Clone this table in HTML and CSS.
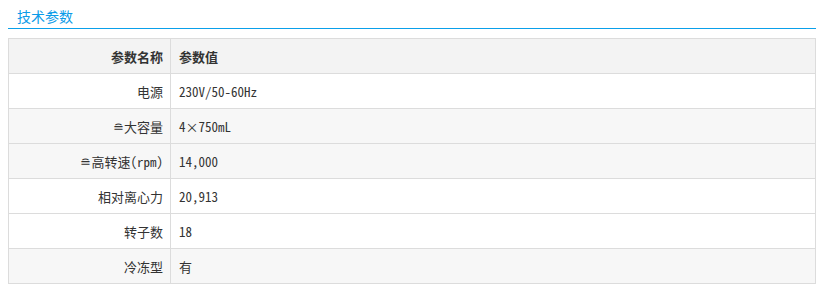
FILE: index.html
```html
<!DOCTYPE html>
<html lang="zh-CN">
<head>
<meta charset="utf-8">
<title>技术参数</title>
<link rel="stylesheet" href="styles.css">
</head>
<body>
<div class="panel">
  <div class="panel-title"><span>技术参数</span></div>
  <table class="spec">
    <tr class="head"><th class="k">参数名称</th><th class="v">参数值</th></tr>
    <tr class="w"><td class="k">电源</td><td class="v">230V/50-60Hz</td></tr>
    <tr class="g"><td class="k">≘大容量</td><td class="v">4×750mL</td></tr>
    <tr class="g"><td class="k">≘高转速(rpm)</td><td class="v">14,000</td></tr>
    <tr class="w"><td class="k">相对离心力</td><td class="v">20,913</td></tr>
    <tr class="w"><td class="k">转子数</td><td class="v">18</td></tr>
    <tr class="g"><td class="k">冷冻型</td><td class="v">有</td></tr>
  </table>
</div>
</body>
</html>
```
FILE: styles.css
```css
body {
  margin: 8px;
  background: #fff;
  font-family: "Noto Sans Mono CJK SC", "Noto Sans CJK SC", sans-serif;
  color: #333;
}
.panel {
  width: 808px;
}
.panel-title {
  font-size: 14px;
  line-height: 16px;
  padding: 0 0 4px 9px;
  color: #0a9be8;
  border-bottom: 1px solid #0aa0ea;
}
.spec {
  margin-top: 9px;
  width: 808px;
  border-collapse: collapse;
  font-size: 13px;
}
.spec th, .spec td {
  border: 1px solid #dcdcdc;
  height: 35px;
  padding: 0 8px;
  box-sizing: border-box;
}
.spec .k {
  width: 162px;
  text-align: right;
  padding-right: 7px;
}
.spec .v {
  text-align: left;
}
.spec th {
  font-weight: bold;
  font-size: 13px;
}
.head { background: #f3f3f3; }
.w { background: #fff; }
.g { background: #f7f7f7; }
```
